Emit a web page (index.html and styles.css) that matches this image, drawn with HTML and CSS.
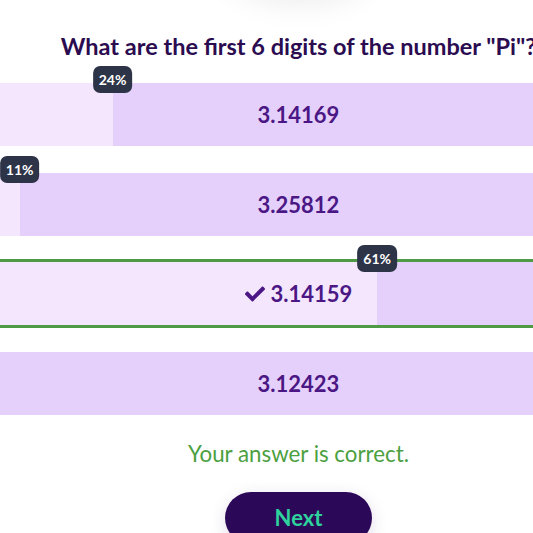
FILE: index.html
```html
<!DOCTYPE html>
<html lang="en">
<head>
  <meta charset="UTF-8" />
  <title>Quiz</title>
  <link rel="stylesheet" href="styles.css">
</head>
<body>
  <main class="quiz">
    <div class="cover"></div>

    <h2 class="question">What are the first 6 digits of the number "Pi"?</h2>

    <div class="options">
      <div class="option">
        <div class="fill" style="width:24%"></div>
        <span class="badge" style="left:24%">24%</span>
        <span class="label">3.14169</span>
      </div>
      <div class="option">
        <div class="fill" style="width:11%"></div>
        <span class="badge" style="left:11%">11%</span>
        <span class="label">3.25812</span>
      </div>
      <div class="option correct">
        <div class="fill" style="width:61%"></div>
        <span class="badge" style="left:61%">61%</span>
        <span class="label">
          <svg class="check" viewBox="0 0 512 512" aria-hidden="true">
            <path d="M173.9 439.4L7.5 273c-10-10-10-26.2 0-36.2l36.2-36.2c10-10 26.2-10 36.2 0L192 312.7 432.1 72.6c10-10 26.2-10 36.2 0l36.2 36.2c10 10 10 26.2 0 36.2L210.1 439.4c-10 10-26.2 10-36.2 0z"/>
          </svg>
          3.14159
        </span>
      </div>
      <div class="option">
        <span class="label">3.12423</span>
      </div>
    </div>

    <p class="result">Your answer is correct.</p>

    <button class="next">Next</button>
  </main>
</body>
</html>
```

FILE: styles.css
```css
body {
  margin: 0;
  padding: 0;
  background: #fff;
  overflow: hidden;
  font-family: Lato, "Open Sans", sans-serif;
}
.quiz {
  width: 715px;
  margin-left: -59px;
  display: flex;
  flex-direction: column;
  align-items: center;
}
.cover {
  width: 170px;
  height: 100px;
  margin-top: -112px;
  border-radius: 0 0 70px 70px;
  background: #fff;
  box-shadow: 0 8px 36px rgba(0, 0, 0, 0.11);
}
.question {
  margin: 44px 0 0;
  font-size: 23.5px;
  line-height: 28px;
  font-weight: bold;
  color: #2b0c50;
  text-align: center;
}
.options {
  align-self: stretch;
  margin-top: 20px;
  display: flex;
  flex-direction: column;
  gap: 20.5px;
}
.option {
  position: relative;
  height: 63px;
  border: 3px solid transparent;
  border-left: 0;
  border-right: 0;
  background: #e4d0fa;
  background-clip: padding-box;
  display: flex;
  align-items: center;
  justify-content: center;
}
.option.correct {
  border-color: #4f9a45;
}
.fill {
  position: absolute;
  left: 0;
  top: 0;
  bottom: 0;
  background: #f3e6fd;
}
.label {
  position: relative;
  display: flex;
  align-items: center;
  gap: 6px;
  font-size: 22px;
  font-weight: bold;
  color: #4b1785;
}
.check {
  width: 20px;
  height: 20px;
  fill: #4b1785;
}
.badge {
  position: absolute;
  top: -17px;
  transform: translateX(-50%);
  z-index: 2;
  padding: 5px 6px;
  line-height: 17px;
  border-radius: 7px;
  background: #2e3447;
  color: #fff;
  font-size: 14px;
  font-weight: bold;
}
.result {
  margin: 22px 0 0;
  font-size: 22.3px;
  line-height: 28px;
  color: #4ca03f;
}
.next {
  margin-top: 24px;
  width: 147px;
  height: 52px;
  border: none;
  border-radius: 26px;
  background: #2c0958;
  color: #2ed29d;
  font-family: inherit;
  font-size: 22px;
  font-weight: bold;
  box-shadow: 0 4px 16px rgba(60, 20, 100, 0.15);
  cursor: pointer;
}
```
